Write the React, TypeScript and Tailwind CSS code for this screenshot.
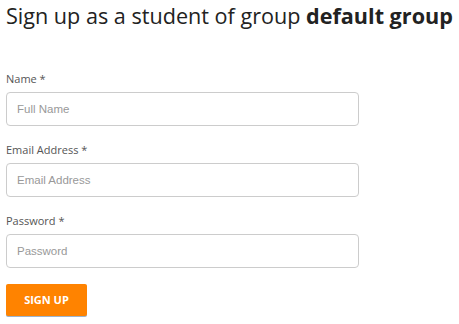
export default function App() {
  const fields = [
    { label: 'Name *', placeholder: 'Full Name', type: 'text' },
    { label: 'Email Address *', placeholder: 'Email Address', type: 'email' },
    { label: 'Password *', placeholder: 'Password', type: 'password' },
  ]

  return (
    <div className="bg-white min-h-screen pl-[6px] font-['Open_Sans',sans-serif] text-[#333]">
      <h1 className="text-[21.6px] leading-normal whitespace-nowrap text-[#222]">
        Sign up as a student of group <b className="font-bold">default group</b>
      </h1>
      <form className="mt-[38.5px] w-[353px]" onSubmit={e => e.preventDefault()}>
        {fields.map(f => (
          <div key={f.label} className="mb-[16px]">
            <label className="block text-[11px] leading-[15px] text-[#555] mb-[6px]">{f.label}</label>
            <input
              type={f.type}
              placeholder={f.placeholder}
              className="w-full h-[34px] border border-[#ccc] rounded-[4px] px-[10px] text-[11.5px] font-['Liberation_Sans',Arial,sans-serif] placeholder:text-[#999] outline-none"
            />
          </div>
        ))}
        <button className="w-[81px] h-[32px] bg-[#ff8300] text-white text-[11px] font-bold rounded-[2px] shadow-[0_1px_0_#9db4cc]">
          SIGN UP
        </button>
      </form>
    </div>
  )
}
